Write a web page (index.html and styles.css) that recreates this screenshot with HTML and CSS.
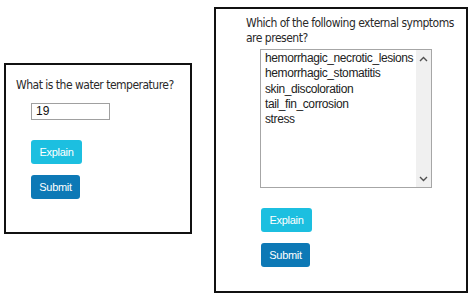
FILE: index.html
```html
<!DOCTYPE html>
<html>
<head>
<meta charset="utf-8">
<link rel="stylesheet" href="styles.css">
</head>
<body>
<div class="page">
  <div class="panel panel-left">
    <div class="question">What is the water temperature?</div>
    <div class="field"><div class="textbox">19</div></div>
    <div class="actions">
      <button class="btn btn-explain">Explain</button>
      <button class="btn btn-submit">Submit</button>
    </div>
  </div>
  <div class="panel panel-right">
    <div class="question">Which of the following external symptoms<br>are present?</div>
    <div class="field">
      <div class="listbox">
        <ul class="options">
          <li>hemorrhagic_necrotic_lesions</li>
          <li>hemorrhagic_stomatitis</li>
          <li>skin_discoloration</li>
          <li>tail_fin_corrosion</li>
          <li>stress</li>
        </ul>
        <div class="scrollbar">
          <svg width="9" height="6" viewBox="0 0 9 6"><path d="M1 5 L4.5 1.5 L8 5" fill="none" stroke="#505050" stroke-width="1.4"/></svg>
          <svg width="9" height="6" viewBox="0 0 9 6"><path d="M1 1 L4.5 4.5 L8 1" fill="none" stroke="#505050" stroke-width="1.4"/></svg>
        </div>
      </div>
    </div>
    <div class="actions">
      <button class="btn btn-explain">Explain</button>
      <button class="btn btn-submit">Submit</button>
    </div>
  </div>
</div>
</body>
</html>
```
FILE: styles.css
```css
html, body {
  margin: 0;
  padding: 0;
  background: #ffffff;
}
.page {
  display: flex;
  align-items: flex-start;
  padding-left: 4px;
  gap: 22px;
}
.panel {
  border: 2px solid #111;
  box-sizing: border-box;
  background: #fff;
}
.panel-left {
  margin-top: 63px;
  width: 188px;
  height: 171px;
  padding: 13px 0 0 10px;
}
.panel-right {
  margin-top: 7px;
  width: 254px;
  height: 286px;
  padding: 7px 0 0 30px;
}
.question {
  font-family: "DejaVu Sans Condensed", "Roboto", sans-serif;
  font-size: 12px;
  letter-spacing: -0.5px;
  line-height: 15px;
  color: #2a2a2a;
  white-space: nowrap;
}
.field {
  padding-left: 15px;
  margin-top: 10px;
}
.panel-right .field {
  padding-left: 14px;
  margin-top: 3px;
}
.textbox {
  width: 79px;
  height: 17px;
  box-sizing: border-box;
  border: 1px solid #a0a0a0;
  font-family: "Liberation Sans", Arial, sans-serif;
  font-size: 12px;
  line-height: 15px;
  padding-left: 4px;
  color: #111;
}
.listbox {
  width: 172px;
  height: 139px;
  box-sizing: border-box;
  border: 1px solid #a6a6a6;
  display: flex;
}
.options {
  list-style: none;
  margin: 0;
  padding: 1px 0 0 4px;
  flex: 1;
  min-width: 0;
  font-family: "Liberation Sans", Arial, sans-serif;
  font-size: 12px;
  letter-spacing: -0.4px;
  line-height: 15.3px;
  color: #222;
  white-space: nowrap;
  overflow: hidden;
}
.scrollbar {
  width: 15px;
  flex: none;
  background: #f0f0f0;
  display: flex;
  flex-direction: column;
  justify-content: space-between;
  align-items: center;
  padding: 6px 0 5px;
  box-sizing: border-box;
}
.actions {
  display: flex;
  flex-direction: column;
  align-items: flex-start;
  gap: 11px;
  padding-left: 15px;
  margin-top: 20px;
}
.btn {
  border: none;
  border-radius: 3px;
  height: 24px;
  padding: 0;
  font-family: "Liberation Sans", Arial, sans-serif;
  font-size: 11px;
  letter-spacing: -0.3px;
  color: #fff;
  cursor: pointer;
}
.btn-explain {
  background: #1cbfe0;
  width: 51px;
}
.btn-submit {
  background: #0d79b6;
  width: 49px;
}
```
